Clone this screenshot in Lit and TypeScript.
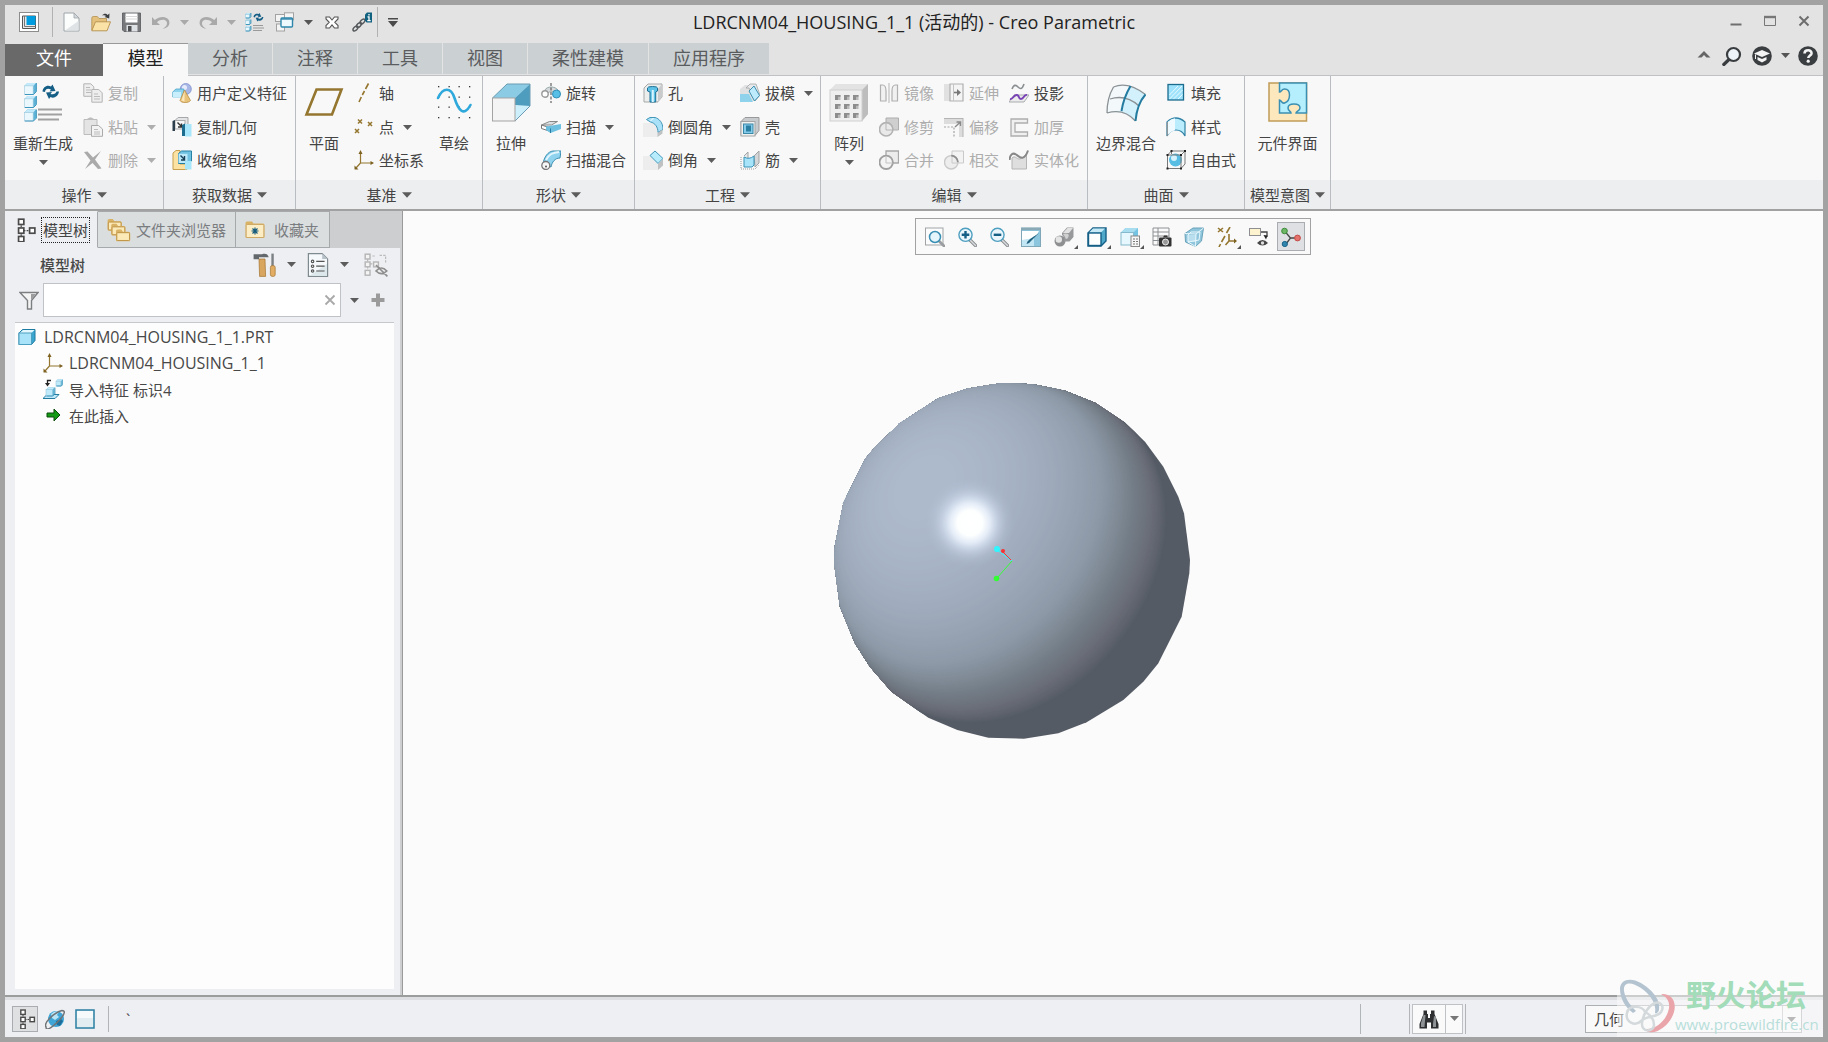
import { LitElement, html, svg, css, nothing } from "lit";
import type { SVGTemplateResult, TemplateResult } from "lit";
import { customElement, property } from "lit/decorators.js";
import { classMap } from "lit/directives/class-map.js";

/* ---------- reusable icon fragments ---------- */

const cube = (x: number, y: number, s: number, front = "#eaf8fe", side = "#5fb4d8", line = "#2f8db5") => {
  const d = s * 0.25;
  const f = s - d;
  return svg`
    <path d="M${x} ${y + d}l${d} ${-d}h${f}v${f}l${-d} ${d}z" fill=${side}/>
    <path d="M${x} ${y + d}l${d} ${-d}h${f}l${-d} ${d}z" fill="#c3eafa"/>
    <rect x=${x} y=${y + d} width=${f} height=${f} fill=${front} stroke="#9cc8dc" stroke-width=".6"/>
    <path d="M${x + 0.4} ${y + s}h${f}l${d} ${-d}v${-f}" fill="none" stroke=${line} stroke-width=".9"/>`;
};

const lens = (sign: SVGTemplateResult | typeof nothing) => svg`
  <path d="M13 13l5.500 5.500" stroke="#8b8f93" stroke-width="3.400" stroke-linecap="round"/>
  <path d="M13.500 13.500l5 5" stroke="#d9dbdd" stroke-width="1.400" stroke-linecap="round"/>
  <circle cx="8.500" cy="7.800" r="6.600" fill="#eaf6fc" stroke="#4f9fc0" stroke-width="1.400"/>
  ${sign}`;

const node = (x: number, y: number, c: string) =>
  svg`<rect x=${x} y=${y} width="4.400" height="4.400" fill="#fff" stroke=${c} stroke-width="1.400"/>`;

const tree = (c: string) => svg`
  <path d="M6 6v9M8 10.500h7" stroke=${c} stroke-width="1" stroke-dasharray="1.500 1"/>
  ${node(3.8, 1, c)}${node(3.8, 8.3, c)}${node(3.8, 15.4, c)}${node(13, 8.3, c)}`;

const cycle = svg`
  <path d="M2.500 8.500C3 4 7 1.500 11 3.500l1.500-2 3 6.500-6 .5 1.500-2C8 5 5.500 5.500 5 9z" fill="#155f86"/>
  <path d="M19 8.500C18.500 13 14 16 10.500 14l-1.500 2-3-6.500 6-.5-1.500 2c3 1 5.500-.5 6-2.500z" fill="#155f86"/>`;

const axes = svg`
  <path d="M6.500 2v11h12M6.500 13l-4.500 5" fill="none" stroke="#94762f" stroke-width="1.200"/>
  <path d="M4.500 4l2-4 2 4zM16.500 11l3.500 2-3.500 2zM.5 15.500v4h4z" fill="#7d6222"/>`;

const folder = (x: number, y: number) => svg`
  <path d=${`M${x} ${y + 2}q0-1.500 1.500-1.500h3.500l1.500 2h5.500q1.500 0 1.500 1.500v6.500q0 1-1 1h-11.500q-1 0-1-1z`} fill="#d9b265"/>
  <rect x=${x + 0.8} y=${y + 3.4} width="12" height="7.400" rx=".8" fill="#fbe9b7" stroke="#b98c3c" stroke-width=".8"/>`;

const dots9 = [0, 1, 2].map((r) => [0, 1, 2].map((c) => svg`
  <rect x=${6 + c * 9} y=${13 + r * 9} width="5.500" height="5" fill="#b9b9b9"/>
  <path d=${`M${6 + c * 9} ${18 + r * 9}v-5h5.500v1.800h-2.500v3.200z`} fill="#8d8d8d"/>`));

/* Small icons use a 20 unit box, large ones a 40 unit box. */
const ICONS: Record<string, SVGTemplateResult> = {
  app: svg`<rect x=".5" y=".5" width="19" height="19" fill="#fff" stroke="#8c8c8c"/>
    <path d="M3.500 4h13v12.500h-13z" fill="#e8e8e8" stroke="#555" stroke-width="1"/>
    <path d="M5.500 4v10.500h11" fill="none" stroke="#777"/><rect x="7.500" y="4" width="9" height="9" fill="#009ce0"/>`,
  new: svg`<path d="M3 1h10l5 5v13H3z" fill="#fbfcfc" stroke="#9fa5a8" stroke-width="1"/><path d="M4 18.500h13.500V9z" fill="#dfe3e5"/><path d="M13 1l5 5h-5z" fill="#d3d8db" stroke="#9fa5a8" stroke-width=".8"/>`,
  open: svg`<path d="M.8 18V6q0-1.500 1.500-1.500h4L8 6.500h7.500V10z" fill="#e3c07c" stroke="#b48f4c" stroke-width=".8"/>
    <path d="M4.500 9.800h15L16 18.800H.8z" fill="#fbe3a8" stroke="#b48f4c" stroke-width=".9"/>
    <path d="M11 3.500c2-2.500 4.500-2 5.500-.5l2-1.500-.3 5-4.700-1.500 1.600-1c-1-1-2.400-1-4.100-.5z" fill="#3b3f42"/>`,
  save: svg`<path d="M1.500 1h18v18.500H3L1.500 18z" fill="#77797b" stroke="#55585a" stroke-width=".8"/><rect x="4.500" y="1.500" width="12" height="9" fill="#fff"/><path d="M4.500 4.500h12M4.500 7h12" stroke="#d8d8d8"/><rect x="5.500" y="13" width="11" height="6.500" fill="#dfe2e4"/><rect x="7" y="14" width="3.500" height="5.500" fill="#4e5052"/>`,
  undo: svg`<path d="M1 5v8h8l-3-2.800C9 7.500 14 7 15.500 9.500S15 15 11.500 17c5.500-1 8-4.500 6.500-8.500S9 3.500 3.800 8z" fill="#a9a9a9"/>`,
  redo: svg`<path d="M19 5v8h-8l3-2.800C11 7.500 6 7 4.500 9.500S5 15 8.500 17C3 16 .5 12.500 2 8.500s9-5 14.200-.5z" fill="#a9a9a9"/>`,
  regenSmall: svg`${cube(0.5, 1, 5)}${cube(0.5, 7.5, 5)}${cube(0.5, 14, 5)}<g transform="translate(7 0) scale(.6)">${cycle}</g><path d="M8 13.500h10M8 16h11M8 18.500h9" stroke="#9a9a9a" stroke-width="1.200"/>`,
  windows: svg`<g fill="#f4f4f4" stroke="#a2a2a2"><rect x=".5" y="2.500" width="9" height="7"/><rect x="9.500" y=".8" width="9" height="7"/><rect x="1.500" y="12" width="8" height="7"/></g>
    <rect x="6" y="6" width="11.500" height="9" rx="1" fill="#eef9fe" stroke="#2e86ab" stroke-width="1.400"/><path d="M6 7h11.500" stroke="#2e86ab" stroke-width="1.400"/>`,
  closeWin: svg`<path d="M4 5h3.500L10 8l2.500-3H16v2l-3.200 3.300L16 13.500V16h-3.500L10 12.800 7.500 16H4v-2.500l3.200-3.200L4 7z" fill="#fff" stroke="#555" stroke-width="1.100"/>`,
  link: svg`<g fill="none" stroke="#55595c" stroke-width="1.500"><ellipse cx="3.500" cy="16.500" rx="3" ry="1.700" transform="rotate(-45 3.500 16.500)"/><ellipse cx="7" cy="13" rx="3" ry="1.700" transform="rotate(-45 7 13)"/><ellipse cx="10.500" cy="9.500" rx="3" ry="1.700" transform="rotate(-45 10.500 9.500)"/></g>
    <path d="M13 2.500l2-2h5v10h-5.500l-1.500-2z" fill="#10607f"/><path d="M17 2v1.500M15.500 4.800h1.500v3.800M15.300 8.600h3.400" stroke="#fff" stroke-width="1.300" fill="none"/>`,
  copy: svg`<g fill="#eee" stroke="#b4b4b4"><path d="M.8.800h7l3 3v9.500H.8z"/><path d="M8.800 6.500h7l3.400 3.400v9.300H8.800z"/></g><path d="M3 4.500h4M3 7h5M3 9.500h5M11 11h4M11 13.500h6M11 16h6" stroke="#bbb"/>`,
  paste: svg`<path d="M1 2.500h13v15H1z" fill="#e4e4e4" stroke="#bcbcbc"/><path d="M4.500 3V1.500L7.500.3l3 1.200V3z" fill="#bdbdbd"/><path d="M8.500 8.500h7l4 3.500v7.300h-11z" fill="#f3f3f3" stroke="#aaa"/><path d="M11 12.500h4M11 15h6M11 17h6" stroke="#bbb"/>`,
  del: svg`<path d="M1 2l3.500-.5L10 7.500 18 1l-6 8.500 6.500 9-3.500.5-5.500-6L2 19l5.500-8.500z" fill="#aaa"/>`,
  udf: svg`<circle cx="13.800" cy="6" r="5.500" fill="#a9b7e6" stroke="#7f90cd" stroke-width=".8"/><circle cx="12.500" cy="4.500" r="2.500" fill="#e6ebfb"/>
    <path d="M.8 9l3-3h8v8H.8z" fill="#8fd4ee" stroke="#4aa3c6" stroke-width=".8"/><path d="M1 9h8v5.500H1z" fill="#c9effc"/>
    <path d="M12.500 7l6 10.500c-2 2.800-9 2.800-10.500 0z" fill="#e9c27a" stroke="#b98e45" stroke-width=".8"/><path d="M12.500 8l-3 9.500 3 1z" fill="#fbe7bd"/>`,
  copyGeom: svg`<path d="M3 3.500l3-3H16v8h-3" fill="#e3e4e5" stroke="#a5a7a8"/><rect x="3" y="3.500" width="10" height="8.500" fill="#f8f8f8" stroke="#a9abac"/><path d="M.5 4l2.500-1v11H.5z" fill="#2c3e4b"/><path d="M5.500 5.500l4 4m0-3v3.500h-3.500" stroke="#333" stroke-width="1.400" fill="none"/><path d="M10 8l3-1.500V19h-3z" fill="#1b6c8f"/><path d="M13 7h6.500v12.500H13z" fill="#a8e6fb"/>`,
  shrink: svg`<path d="M1 3l3-2.500h4V14h7v5.500H1z" fill="#fbe1a2" stroke="#c79f4f"/><path d="M6.500 3.500l3-2.500h10v10l-3 2.500h-10z" fill="#6fc2e2" stroke="#2781a5"/><rect x="6.500" y="3.800" width="9" height="9.200" fill="#bdeafa"/><path d="M8.500 5.500l4 4m0-3.500v4H9" stroke="#183f55" stroke-width="1.400" fill="none"/><path d="M13 11h6.500v8.500H13z" fill="#a8e6fb"/>`,
  axis: svg`<path d="M14.500.500l-3 5.500M10.500 8l-2.200 4M7.300 14l-2.300 5" stroke="#94762f" stroke-width="1.600" fill="none"/>`,
  points: svg`<g stroke="#94762f" stroke-width="1.500"><path d="M4 2.500l4 4M8 2.500l-4 4M14 5l4 4M18 5l-4 4M1 12l4 4M5 12l-4 4"/></g>`,
  csys: axes,
  revolve: svg`<path d="M4 7C6 3 14 3 17 7l-3 3c-2-2-5-2-7 0z" fill="#d6d9db" stroke="#9aa"/><circle cx="4" cy="11" r="3.200" fill="#fff" stroke="#999" stroke-width="1.400"/><circle cx="15.500" cy="11" r="4" fill="#57bfe6" stroke="#2f8db5"/><path d="M10 0v20" stroke="#444" stroke-dasharray="3 1.500"/>`,
  sweep: svg`<path d="M.5 8l8-3.500h8l-6 3.500z" fill="#dcdfe1" stroke="#888"/><path d="M.5 8v3.500l9 3V11z" fill="#fff" stroke="#777"/><path d="M5 9.500l15-2.500v5L9.500 16 5 13z" fill="#6dc0e0"/><path d="M9.500 11.500v4.500" stroke="#287ea3"/>`,
  sweptBlend: svg`<path d="M2 14C3 7 7 1.500 12 1h8l-1 7c-5 0-8 4-9 9z" fill="#8fd3ef" stroke="#3c8fb1"/><path d="M5 10C8 4 12 2.500 18 2" stroke="#e4f6fd" stroke-width="2" fill="none"/><circle cx="4.800" cy="15.500" r="4" fill="#f6f6f6" stroke="#777" stroke-width="1.300"/><circle cx="5" cy="16.500" r="1" fill="#555"/>`,
  hole: svg`<path d="M1 5l4-4h14v13l-4 4.500V19H1z" fill="#eceded" stroke="#a5a7a8"/><path d="M15 6l4-5v13l-4 5z" fill="#c8cacb"/><path d="M4.500 5q0-1.500 5-1.500t5 1.500v3l-1.800 1v10H7V9L4.500 8z" fill="#5ec1e6" stroke="#1e7194"/><path d="M8.800 7h2v12h-2z" fill="#d8f4fe"/>`,
  round: svg`<path d="M0 6h9q6 1 6 9v5H0z" fill="#ededee"/><path d="M3.500 2.500L7 .5h5c4 1 8 5 8 12l-5 3C15 10 12 6 7.500 5z" fill="#a9e2f8" stroke="#4296b8"/><path d="M14.500 16l5-3.500v4L14.500 20z" fill="#bfc1c2"/><path d="M7.500 4l3-3" stroke="#fff"/>`,
  chamfer: svg`<path d="M0 6h7l8 7v7H0z" fill="#ededee"/><path d="M7 5.500L12 1l8 7.500-5 5z" fill="#b7ecfd" stroke="#4296b8"/><path d="M15 14l5-5v6.500L15 20z" fill="#bfc1c2"/>`,
  draft: svg`<path d="M0 6L5 2h6L14 18H0z" fill="#dfe1e2"/><path d="M0 11h9l4 8H0z" fill="#8fd2ec"/><path d="M6 5l4-4h6l4 11-5 6-6-13z" fill="#e7e8e9" stroke="#a3a5a6" stroke-width=".8"/><path d="M9 8l5-5 5.500 9.500-5 5.500z" fill="#bdebfb" stroke="#3f8fb0"/>`,
  shell: svg`<path d="M1 4.500l4-4h14v13l-4 5H1z" fill="#c8cbcd" stroke="#999"/><rect x="1" y="4.500" width="14" height="14.500" fill="#eff0f0" stroke="#a2a4a5"/><rect x="3.500" y="7" width="9.500" height="9.500" fill="#83cbe8" stroke="#3b88a9"/><rect x="6" y="8.500" width="5" height="6" fill="#2b7fa3"/>`,
  rib: svg`<path d="M4 6l4-4v11" fill="#e7e8e8" stroke="#a0a2a3"/><path d="M14 6l5-5v12l-4 4z" fill="#d4d6d7" stroke="#a0a2a3"/><path d="M4 7q5 3 10-1v9l-2 2H4z" fill="#a7e3f9" stroke="#3a93b7"/><path d="M1 7v12h14l4-4" fill="none" stroke="#999" stroke-dasharray="1 1"/>`,
  mirror: svg`<path d="M10 0v20" stroke="#b5b5b5"/><path d="M1.500 2h2c3 0 3.500 3 3.500 6v10H1.500zM18.500 2h-2c-3 0-3.500 3-3.500 6v10h5.500z" fill="#f1f1f1" stroke="#b0b0b0" stroke-width="1.200"/>`,
  trim: svg`<path d="M7 1h12.500v12H7z" fill="#cfcfcf" stroke="#aeaeae"/><circle cx="7.200" cy="12.300" r="6.700" fill="#e9e9e9" stroke="#b2b2b2" stroke-width="1.600"/><path d="M7 6v7h6.500" stroke="#b5b5b5" fill="none"/>`,
  merge: svg`<path d="M7 1h12.500v12H7z" fill="#ececec" stroke="#a8a8a8" stroke-width="1.300"/><circle cx="7.200" cy="12.300" r="6.700" fill="#f4f4f4" stroke="#a0a0a0" stroke-width="1.800"/><path d="M7 6v7h6.500" stroke="#c2c2c2" fill="none"/>`,
  extend: svg`<path d="M0 1h8v17H0z" fill="#e1e1e1"/><path d="M6 1h13v17H6z" fill="#f4f4f4" stroke="#b0b0b0" stroke-width="1.200"/><path d="M9.500 1v17" stroke="#c4c4c4"/><path d="M10 9.500h5" stroke="#777" stroke-width="1.600"/><path d="M13 6l4 3.500-4 3.500z" fill="#777"/>`,
  offset: svg`<path d="M0 1.500h19V20h-4V7H0z" fill="#dcdcdc"/><path d="M19 1v19M0 1.500h19" stroke="#b4b4b4"/><path d="M0 10h10v10" fill="none" stroke="#a3a3a3" stroke-width="1.200" stroke-dasharray="2 1.500"/><path d="M11 10l5.500-5m-4 0h4v4" stroke="#8a8a8a" fill="none" stroke-width="1.400"/>`,
  intersect: svg`<path d="M8 1h11.500v12H8z" fill="#f3f3f3" stroke="#cacaca"/><circle cx="7.200" cy="12.300" r="6.700" fill="#ededed" stroke="#c9c9c9" stroke-width="1.400"/><path d="M7.200 5.600a6.700 6.700 0 0 1 6.700 6.700" stroke="#8e8e8e" stroke-width="1.800" fill="none"/><path d="M8 7v6h6" stroke="#cacaca" fill="none"/>`,
  project: svg`<path d="M3 6c2-5 4-4 6-2s4 3 6-3" fill="none" stroke="#8a8f92" stroke-width="1.600"/><path d="M5 12h15l-5 7H0z" fill="#ececed" stroke="#a9abac"/><path d="M1 16c3 1 4-5 7-4s1 4 4 4 3-5 6-4" fill="none" stroke="#7a43b6" stroke-width="2"/>`,
  thicken: svg`<path d="M18.500 2H2v17h16.500v-4H6V6h12.500z" fill="#f0f0f0" stroke="#adadad" stroke-width="1.300"/>`,
  solidify: svg`<path d="M3 8v11h14.500V4c-2 1-4 5-7 5S6 5 3 8z" fill="#dedede" stroke="#b4b4b4"/><path d="M.5 10C1 4 4 2.500 7 4.500s8 8 12-4" fill="none" stroke="#888" stroke-width="2"/>`,
  fill: svg`<rect x="2" y="1.500" width="15.500" height="15.500" fill="#9ee3fb" stroke="#1c6c8e" stroke-width="1.300"/><path d="M3.500 12l8.500-9M3.500 16L16 3M7.500 16l9-9M12 16l4.500-4.500" stroke="#e8faff" stroke-width="1"/>`,
  style: svg`<path d="M1 5q9-8 18 0v14q-3-6-9-6t-9 6z" fill="#b9ecfc" stroke="#2f82a5" stroke-width="1.200"/><path d="M1.500 5q4-3.500 7.500-3.700v12q-4 1-7.500 4.700z" fill="#eefaff"/><path d="M1.300 5v14" stroke="#888"/>`,
  freestyle: svg`<circle cx="9.500" cy="10" r="6.500" fill="#57bde3"/><circle cx="8" cy="8" r="3" fill="#d6f2fc"/><path d="M1.500 5l4-4h13.500v13l-4 4.500H1.500zM1.500 5H15v13.500M15 5l4-4M5.500 1v3" fill="none" stroke="#777"/><g fill="#222"><rect x=".5" y="4" width="2" height="2"/><rect x="14" y="4" width="2" height="2"/><rect x="14" y="17.500" width="2" height="2"/><rect x=".5" y="17.500" width="2" height="2"/><rect x="18" y="0" width="2" height="2"/><rect x="4.500" y="0" width="2" height="2"/></g>`,
  /* large */
  regen: svg`${cube(1.5, 1, 11.5)}${cube(1.5, 14, 11.5)}${cube(1.5, 27.5, 11.5)}<g transform="translate(17 1)">${cycle}</g><path d="M15 27.500h24M15 32.500h24M15 37.500h21" stroke="#a0a0a0" stroke-width="1.800"/>`,
  plane: svg`<path d="M12.500 7.500h25L28 32.500H2.500z" fill="none" stroke="#94762f" stroke-width="2.600"/>`,
  sketch: svg`<g fill="#333">${[4, 14.5, 24.5, 35].map((x) => [4, 14.5, 24.5, 35].map((y) => svg`<rect x=${x} y=${y} width="1.300" height="1.300"/>`))}</g><path d="M4 16c5-11 13-11 16.500 0s9 20 16 7" fill="none" stroke="#2fa9dc" stroke-width="2.600" stroke-linecap="round"/>`,
  extrude: svg`<path d="M1.500 16L16 2h23v22L24 39z" fill="#d9f3fd"/><path d="M16 2h23L24 16H1.500z" fill="#8bcbe4"/><path d="M24 16L39 2v22l-15-1z" fill="#4f9dbe"/><path d="M24 24h15L24 39z" fill="#cdeffb"/><path d="M16 2h23v22L24 39M1.500 16L16 2" fill="none" stroke="#6b9cb1"/><rect x="1.500" y="16" width="22.500" height="23" fill="#f4f4f4" stroke="#a3a3a3"/>`,
  pattern: svg`<path d="M1 8l6-6h32v30l-6 7H1z" fill="#dcdcdc"/><path d="M1 8l6-6h32l-6 6z" fill="#e3e3e3"/><path d="M33 8l6-6v30l-6 7z" fill="#bdbdbd"/><rect x="1" y="8" width="32" height="31" fill="#efefef" stroke="#cfcfcf"/>${dots9}`,
  boundary: svg`<path d="M7.500 5q14-6 32 7.500Q31 22 29.500 39 18 26 1 31 1 16 7.500 5z" fill="#d3f1fc"/><path d="M7.500 5Q15 1 24.500 4q-7 12-9 25-7-1-14.500 2Q1 16 7.500 5z" fill="#f3f8fa"/><path d="M7.500 5q14-6 32 7.500M4 17q16-5 29 7M1 31q17-5 28.500 8M7.500 5Q1 16 1 31" fill="none" stroke="#8b9296" stroke-width="1.300"/><path d="M39.500 12.500Q31 22 29.500 39M24.500 4q-7 12-9 25" fill="none" stroke="#237ba0" stroke-width="2"/>`,
  component: svg`<rect x="1" y="1" width="37.500" height="38" fill="#fde7bd" stroke="#c09c58" stroke-width="1.500"/><path d="M11.500 1h27v30H28c0-2 4-2 4-5s-3-4-6-4-6 1-6 4 3 3 3 5H11.500V18c2 0 2 4 5 3s5-4 5-8-2-6-5-6-3 3-5 3z" fill="#b5effe" stroke="#3b8fb2" stroke-width="1.500"/>`,
  /* view toolbar */
  refit: svg`<rect x=".5" y="1" width="17.500" height="17" fill="#fcfcfc" stroke="#a0a3a5"/><path d="M14 14l5 5" stroke="#9a9da0" stroke-width="2.800" stroke-linecap="round"/><circle cx="10" cy="10" r="5.500" fill="#e5f5fc" stroke="#3a8fb4" stroke-width="1.500"/>`,
  zoomIn: lens(svg`<path d="M8.500 4v7.600M4.700 7.800h7.600" stroke="#155f86" stroke-width="2.400"/>`),
  zoomOut: lens(svg`<path d="M4.700 7.800h7.600" stroke="#155f86" stroke-width="2.400"/>`),
  repaint: svg`<rect x=".5" y="1" width="19" height="18.500" fill="#8cc6de" stroke="#7fa7b8"/><path d="M1 4h17q-3 9-17 9z" fill="#fff"/><path d="M1 13q8 0 12-4v10H1z" fill="#c3e6f4"/><path d="M.5 2h19" stroke="#8aa9b6" stroke-width="2.400"/><path d="M18 6l-8 8q-2 3-4.500 3 .5-3 3-4.500z" fill="#20617f"/>`,
  shading: svg`<circle cx="6" cy="14" r="5.500" fill="#8d8f91"/><circle cx="4.800" cy="12.500" r="3.200" fill="#e4e4e4"/><path d="M8 8V6l5-5.500h6.500V10l-4 4.500H10q1-4-2-6.500z" fill="#97999b"/><path d="M9 6l4.500-5h5.500l-4 5z" fill="#e2e2e2"/><path d="M9 7q3-1 5 0t-1 5q-2 0-2-2z" fill="#d0d0d0"/>`,
  solidView: svg`<path d="M1 6l5-5h13v13l-5 5H1z" fill="#4fa7c9" stroke="#155f86" stroke-width="1.400"/><path d="M2 5.500l4-4h12l-4 4z" fill="#c5e9f6"/><rect x="1.500" y="6" width="12.500" height="12.500" fill="#fdfefe" stroke="#155f86" stroke-width="1.400"/>`,
  savedViews: svg`<path d="M1 5.500L5.500 1H18v12L13 18H1z" fill="#74c3e2"/><path d="M1 5.500L5.500 1H18l-4.500 4.500z" fill="#a8ddf0"/><rect x="1" y="5.500" width="12.500" height="12.500" fill="#e6f7fd" stroke="#86b9cd"/><rect x="11" y="9" width="8.500" height="10.500" fill="#f6f6f6" stroke="#888"/><path d="M13 12h2M16 12h2M13 14.500h2M16 14.500h2M13 17h2M16 17h2" stroke="#777"/>`,
  viewMgr: svg`<path d="M1 1h16v17H1zM1 5h16M1 9h16M1 13.500h16M6 1v17" fill="#fafafa" stroke="#8d9092"/><rect x="7" y="10.500" width="12.500" height="9" rx="1" fill="#333"/><path d="M11 10.500l1-2h3l1 2z" fill="#333"/><circle cx="13.500" cy="15" r="3" fill="#999" stroke="#eee"/>`,
  persp: svg`<path d="M1 6.500L9 1h10.500l-2 13-6 5.500L1.500 15z" fill="#8fc6dc" stroke="#6aa3ba"/><path d="M4 8h8v7H4z" fill="#b9dfee"/><path d="M1 6.500l11 .5 7.500-6M12 7l-.5 12.500M4 8l3-3h9M4 8v7l7.500 4.500M16 5l-1 8-11 2" fill="none" stroke="#e8f7fd" stroke-width="1"/>`,
  datum: svg`<g stroke="#94762f" stroke-width="1.600" fill="none"><path d="M1 1l5 4M6 1L1 5M13 0L9.500 6M8 9l-3.500 6M3.500 17L2 20M12 7v7h6M12 14l-3.500 4"/></g><path d="M17 11.500l3 2.500-3 2.500z" fill="#7d6222"/>`,
  annot: svg`<rect x=".5" y="1.500" width="11" height="7" fill="#fdf3cf" stroke="#8d8f90"/><path d="M12 5h6v5" stroke="#444" stroke-width="1.300" fill="none"/><path d="M14.500 8l4 .5-1.500 4z" fill="#222"/><path d="M8 16q5.500-6 11 0-5.500 5-11 0z" fill="#444"/><circle cx="13.500" cy="16" r="1.700" fill="#ddd"/>`,
  spin: svg`<path d="M4 4.500l5.500 6.500L5 17M9.500 11h6" stroke="#444" stroke-width="1.300" fill="none"/><circle cx="3.500" cy="4" r="2.800" fill="#6cb665" stroke="#3f8b3c"/><circle cx="3.800" cy="17" r="2.600" fill="#2f85ad" stroke="#1b6285"/><circle cx="16.500" cy="11" r="2.900" fill="#e4716c" stroke="#c24c49"/>`,
  /* side panel */
  tree: tree("#4a4a4a"),
  folders: svg`<g transform="scale(.88)">${folder(0.5, 0.5)}${folder(4, 5)}${folder(8.5, 10.5)}</g>`,
  favorite: svg`<path d="M.5 3q0-1.500 1.500-1.500h5l1.500 2H18q1.500 0 1.500 1.500v12q0 1-1 1h-17q-1 0-1-1z" fill="#d9b265"/><rect x="1.200" y="4.500" width="17.600" height="13" rx=".8" fill="#fcedc4" stroke="#c39a50" stroke-width=".7"/><path d="M10 7.500v7M6.500 11h7M7.500 8.500l5 5M12.500 8.500l-5 5" stroke="#135a7d" stroke-width="1.200"/>`,
  tools: svg`<path d="M.5 1h7c3-1 5 0 5.500 2.500L11 3.500H5v1.800H.5z" fill="#63686c"/><path d="M5 5h5l.5 14.500h-5z" fill="#d9a660" stroke="#a57534" stroke-width=".6"/><path d="M15.300.5h2v11h-2z" fill="#7b8084"/><rect x="14.500" y="10.500" width="4" height="9" rx="1.500" fill="#e2ad62" stroke="#a57534" stroke-width=".6"/>`,
  settings: svg`<path d="M2 .5h11.500l4.500 4.500v14.500H2z" fill="#f5f9fb" stroke="#7f8a90"/><path d="M3 19L17.500 9v10z" fill="#dde8ec"/><path d="M13.500.5L18 5h-4.500z" fill="#b7c2c8"/><path d="M8.500 7h7M8.500 11h7M8.500 15h7" stroke="#555"/><g fill="none" stroke="#555"><circle cx="5.500" cy="7" r="1"/><circle cx="5.500" cy="11" r="1"/><circle cx="5.500" cy="15" r="1"/></g>`,
  hideTree: svg`<path d="M3 5v11M5 9h4M7 2.500h3M13 2h5v7" stroke="#bbb" fill="none" stroke-dasharray="2 1"/><g fill="#f4f4f4" stroke="#b6b6b6" stroke-width="1.200"><rect x="1" y="1" width="4" height="4"/><rect x="1" y="7.500" width="4" height="4"/><rect x="1" y="14.500" width="4" height="4"/><rect x="8" y="7.500" width="4" height="4"/></g><path d="M10 15q4.500-5 9 0-4.500 4.500-9 0zM10 10l9.500 9.500" fill="none" stroke="#8e8e8e" stroke-width="1.400"/>`,
  funnel: svg`<path d="M1 2.500h18l-6.500 8v8.500h-4v-8.500z" fill="#f4f4f4" stroke="#7c7f81" stroke-width="1.400"/><path d="M12 4h5l-5 6z" fill="#9a9c9e"/>`,
  plus: svg`<path d="M8 3.500h4V8h4.500v4H12v4.500H8V12H3.500V8H8z" fill="#9b9b9b"/>`,
  part: svg`<path d="M1 6l3.500-3.500H17v11L13.500 17.500H1z" fill="#3aa5cf" stroke="#1d7ba1" stroke-width="1"/><path d="M1.500 6L5 3h11.500l-3 3z" fill="#e2f7fe"/><rect x="1" y="6" width="12.500" height="11.500" fill="#a8e3f9" stroke="#4d9fc0"/>`,
  importFeat: svg`<path d="M8 1.500H4.500v3" fill="none" stroke="#222" stroke-width="1.300"/><path d="M2 4h5L4.500 7.500z" fill="#222"/>${cube(13, 0.5, 6.5, "#bfeafa")}<path d="M4 15.500h12l-4 4H0z" fill="#bfe9f8" stroke="#237ba0"/>${cube(3, 8.500, 8.5, "#bfeafa")}`,
  insertHere: svg`<path d="M4 8h7V4l6 6-6 6v-4H4z" fill="#149a14" stroke="#0b4d0b" stroke-width="1"/>`,
  /* status bar and window corner */
  globe: svg`<circle cx="11" cy="10" r="8" fill="#3fa5d6"/><path d="M6 5q4-4 8-2l-2 3 2 2-4 3-3-2z" fill="#b8e4f6"/><path d="M11 12l5-2 2 2-3 5-3-1z" fill="#1c6f9c"/><path d="M1 18q-2-3 4-9T17 1.500q4 0 1 5T8 17t-7 1z" fill="none" stroke="#6f7478" stroke-width="1.500"/>`,
  square: svg`<rect x="1" y="1" width="18" height="18" fill="#e2edf2" stroke="#2a7fa3" stroke-width="1.500"/><rect x="2" y="2" width="16" height="7" fill="#f7fafb"/>`,
  binoculars: svg`<path d="M4.500 1.500h3.500v3.500h1V9h2V5h1V1.500h3.500V5L19.500 15v4.500H12v-6H8v6H.5V15L4.500 5z" fill="#2d2f31"/><path d="M4.500 6L2 14v4h3.500l1-12zM15 7l-1 8v3h3V8z" fill="#8f9294"/>`,
  search: svg`<path d="M7.500 13L1.800 18.500" stroke="#3a3d40" stroke-width="3.200" stroke-linecap="round"/><circle cx="11.500" cy="8.500" r="6.500" fill="#edf5fa" stroke="#3a3d40" stroke-width="2.200"/>`,
  learn: svg`<circle cx="10" cy="10" r="9.800" fill="#3b3e41"/><path d="M10 4l8 3.500-8 3.500-8-3.500zM5.500 11l4.500 2 4.500-2v3L10 16.500 5.500 14z" fill="#f4f4f4"/><path d="M3.500 8.500V13" stroke="#f4f4f4"/>`,
  help: svg`<circle cx="10" cy="10" r="9.800" fill="#3b3e41"/><path d="M6.500 7.500c.3-4.500 7.500-4 7 0-.3 2-3 2-3.200 4.500" fill="none" stroke="#f4f4f4" stroke-width="2.600"/><circle cx="10.200" cy="15.200" r="1.600" fill="#f4f4f4"/>`,
  min: svg`<path d="M4.500 12.500h11" stroke="#6e6e6e" stroke-width="2"/>`,
  max: svg`<path d="M4.500 4.500h11v9h-11z" fill="none" stroke="#777"/><path d="M4 5h12" stroke="#777" stroke-width="2.400"/>`,
  close: svg`<path d="M5.500 4.500l9 9M14.500 4.500l-9 9" stroke="#6e6e6e" stroke-width="2"/>`,
  collapse: svg`<path d="M3.500 11.500L10 5l6.500 6.500h-4L10 9l-2.500 2.500z" fill="#666"/>`,
  clear: svg`<path d="M5.500 5.500l9 9M14.500 5.500l-9 9" stroke="#a9a9a9" stroke-width="1.800"/>`,
};

const LARGE = new Set(["regen", "plane", "sketch", "extrude", "pattern", "boundary", "component"]);

@customElement("ui-icon")
class UiIcon extends LitElement {
  @property() name = "";
  static styles = css`
    :host { display: inline-flex; flex: none; width: 20px; height: 20px; }
    :host([large]) { width: 40px; height: 40px; }
    :host([medium]) { width: 24px; height: 24px; }
    svg { width: 100%; height: 100%; display: block; }
  `;
  render() {
    const n = LARGE.has(this.name) ? 40 : 20;
    return html`<svg viewBox="0 0 ${n} ${n}" aria-hidden="true">${ICONS[this.name] ?? nothing}</svg>`;
  }
}

const caret = () => html`<svg class="caret" viewBox="0 0 9 5" aria-hidden="true"><path d="M0 0h9L4.500 5z" fill="currentColor"/></svg>`;

/* ---------- ribbon ---------- */

interface Cmd { icon: string; text: string; menu?: boolean; off?: boolean; }
interface Group { label: string; menu: boolean; cols: (Cmd | Cmd[])[]; layout: string; }

const GROUPS: Group[] = [
  { label: "操作", menu: true, layout: "g-ops", cols: [
    { icon: "regen", text: "重新生成", menu: true },
    [{ icon: "copy", text: "复制", off: true }, { icon: "paste", text: "粘贴", off: true, menu: true }, { icon: "del", text: "删除", off: true, menu: true }]] },
  { label: "获取数据", menu: true, layout: "g-data", cols: [
    [{ icon: "udf", text: "用户定义特征" }, { icon: "copyGeom", text: "复制几何" }, { icon: "shrink", text: "收缩包络" }]] },
  { label: "基准", menu: true, layout: "g-datum", cols: [
    { icon: "plane", text: "平面" },
    [{ icon: "axis", text: "轴" }, { icon: "points", text: "点", menu: true }, { icon: "csys", text: "坐标系" }],
    { icon: "sketch", text: "草绘" }] },
  { label: "形状", menu: true, layout: "g-shape", cols: [
    { icon: "extrude", text: "拉伸" },
    [{ icon: "revolve", text: "旋转" }, { icon: "sweep", text: "扫描", menu: true }, { icon: "sweptBlend", text: "扫描混合" }]] },
  { label: "工程", menu: true, layout: "g-eng", cols: [
    [{ icon: "hole", text: "孔" }, { icon: "round", text: "倒圆角", menu: true }, { icon: "chamfer", text: "倒角", menu: true }],
    [{ icon: "draft", text: "拔模", menu: true }, { icon: "shell", text: "壳" }, { icon: "rib", text: "筋", menu: true }]] },
  { label: "编辑", menu: true, layout: "g-edit", cols: [
    { icon: "pattern", text: "阵列", menu: true },
    [{ icon: "mirror", text: "镜像", off: true }, { icon: "trim", text: "修剪", off: true }, { icon: "merge", text: "合并", off: true }],
    [{ icon: "extend", text: "延伸", off: true }, { icon: "offset", text: "偏移", off: true }, { icon: "intersect", text: "相交", off: true }],
    [{ icon: "project", text: "投影" }, { icon: "thicken", text: "加厚", off: true }, { icon: "solidify", text: "实体化", off: true }]] },
  { label: "曲面", menu: true, layout: "g-surf", cols: [
    { icon: "boundary", text: "边界混合" },
    [{ icon: "fill", text: "填充" }, { icon: "style", text: "样式" }, { icon: "freestyle", text: "自由式" }]] },
  { label: "模型意图", menu: true, layout: "g-intent", cols: [{ icon: "component", text: "元件界面" }] },
];

@customElement("ribbon-bar")
class RibbonBar extends LitElement {
  static styles = css`
    :host { display: flex; background: #f8f8f8; border-bottom: 2px solid #a1a1a1; font-size: 15px; }
    button { font: inherit; color: #444; background: none; border: 0; padding: 0; margin: 0; white-space: nowrap; line-height: 20px; }
    button:disabled { color: #adadad; }
    .caret { width: 9px; height: 5px; flex: none; color: #5c5c5c; }
    button:disabled .caret { color: #aeaeae; }
    .group { display: flex; flex-direction: column; border-right: 1px solid #b9bcc0; }
    .rest { flex: 1; display: flex; flex-direction: column; }
    .body { flex: 1; display: grid; padding-bottom: 4px; }
    .g-ops .body { grid-template-columns: 76px 82px; }
    .g-data .body { grid-template-columns: 125px; padding-left: 6px; }
    .g-datum .body { grid-template-columns: 56px 74px 56px; }
    .g-shape .body { grid-template-columns: 56px 95px; }
    .g-eng .body { grid-template-columns: 97px 82px; padding-left: 6px; }
    .g-edit .body { grid-template-columns: 56px 65px 65px 80px; }
    .g-surf .body { grid-template-columns: 76px 80px; }
    .g-intent .body { grid-template-columns: 85px; }
    .col { display: grid; grid-template-rows: 34px 34px 32px; justify-items: start; }
    .small { display: flex; align-items: center; gap: 5px; padding-left: 2px; }
    .small .caret { margin-left: 4px; }
    .big { display: flex; flex-direction: column; align-items: center; justify-content: flex-start; padding-top: 6px; gap: 11px; }
    .big .caret { margin-top: -4px; }
    .foot { display: flex; align-items: center; justify-content: center; gap: 5px; height: 29px; background: #edeef0; }
    .foot .caret { width: 10px; height: 6px; }
  `;

  private small(c: Cmd) {
    return html`<button class="small" ?disabled=${c.off}><ui-icon .name=${c.icon}></ui-icon><span>${c.text}</span>${c.menu ? caret() : nothing}</button>`;
  }
  private big(c: Cmd) {
    return html`<button class="big"><ui-icon large .name=${c.icon}></ui-icon><span>${c.text}</span>${c.menu ? caret() : nothing}</button>`;
  }
  render() {
    return html`
      ${GROUPS.map((g) => html`
        <div class="group ${g.layout}" role="group" aria-label=${g.label}>
          <div class="body">
            ${g.cols.map((c) => Array.isArray(c) ? html`<div class="col">${c.map((x) => this.small(x))}</div>` : this.big(c))}
          </div>
          <button class="foot">${g.label}${caret()}</button>
        </div>`)}
      <div class="rest"><div class="body"></div><div class="foot"></div></div>`;
  }
}

/* ---------- model tree panel ---------- */

@customElement("tree-panel")
class TreePanel extends LitElement {
  static styles = css`
    :host { display: flex; flex-direction: column; width: 397px; background: #eeeff2; font-size: 15px; color: #484848; border-right: 1px solid #9a9a9a; box-shadow: inset -2px 0 #cdcfd1; }
    button { font: inherit; color: inherit; background: none; border: 0; padding: 0; display: flex; align-items: center; }
    .caret { width: 9px; height: 5px; color: #5c5c5c; }
    .tabs { display: flex; height: 37px; background: #cdced0; }
    .tab { background: #dadedf; color: #7a7d7f; border: 1px solid #a6a9ab; border-left: 0; gap: 5px; padding: 0 9px; white-space: nowrap; line-height: 20px; }
    .tab.on { background: #eeeff2; color: #444; border-color: transparent #a6a9ab transparent transparent; gap: 3px; padding: 0 7px 0 9px; }
    .tab.on span { border: 1px dotted #222; padding: 2px 1px; }
    .tab.fav { gap: 9px; padding: 0 10px 0 9px; }
    .head { display: flex; align-items: center; height: 33px; padding: 0 14px 2px 35px; gap: 10px; }
    .head .hide { margin-left: 5px; }
    h2 { margin: 0; flex: 1; font-size: 15px; font-weight: 500; }
    .filter { display: flex; align-items: center; gap: 4px; padding: 0 14px; }
    .box { flex: 1; display: flex; align-items: center; height: 32px; border: 1px solid #bfc3c7; background: #fff; }
    .box input { flex: 1; min-width: 0; height: 100%; border: 0; outline: 0; background: none; font: inherit; padding: 0 6px; }
    .filter .drop { padding: 0 5px; }
    ul { flex: 1; list-style: none; margin: 5px 8px 6px 10px; padding: 1px 0; background: #fdfdfd; border-top: 1px solid #c6c9cb; }
    li { display: flex; align-items: center; height: 26px; gap: 6px; padding-left: 28px; white-space: nowrap; }
    li.root { padding-left: 3px; }
    li.latin { font-size: 16px; }
  `;
  render() {
    return html`
      <div class="tabs" role="tablist">
        <button class="tab on" role="tab" aria-selected="true"><ui-icon medium .name=${"tree"}></ui-icon><span>模型树</span></button>
        <button class="tab" role="tab"><ui-icon medium .name=${"folders"}></ui-icon>文件夹浏览器</button>
        <button class="tab fav" role="tab"><ui-icon .name=${"favorite"}></ui-icon>收藏夹</button>
      </div>
      <div class="head">
        <h2>模型树</h2>
        <button aria-label="工具"><ui-icon medium .name=${"tools"}></ui-icon></button>
        <button aria-label="工具菜单">${caret()}</button>
        <button aria-label="设置"><ui-icon medium .name=${"settings"}></ui-icon></button>
        <button aria-label="设置菜单">${caret()}</button>
        <button class="hide" aria-label="隐藏树"><ui-icon medium .name=${"hideTree"}></ui-icon></button>
      </div>
      <div class="filter">
        <ui-icon .name=${"funnel"}></ui-icon>
        <div class="box"><input type="text" aria-label="过滤" /><button aria-label="清除"><ui-icon .name=${"clear"}></ui-icon></button></div>
        <button class="drop" aria-label="过滤菜单">${caret()}</button>
        <button aria-label="添加"><ui-icon .name=${"plus"}></ui-icon></button>
      </div>
      <ul>
        <li class="root latin"><ui-icon .name=${"part"}></ui-icon>LDRCNM04_HOUSING_1_1.PRT</li>
        <li class="latin"><ui-icon .name=${"csys"}></ui-icon>LDRCNM04_HOUSING_1_1</li>
        <li><ui-icon .name=${"importFeat"}></ui-icon>导入特征 标识4</li>
        <li><ui-icon .name=${"insertHere"}></ui-icon>在此插入</li>
      </ul>`;
  }
}

/* ---------- graphics area ---------- */

const STOPS: [number, number, number, number][] = [
  [0, 85, 91, 101], [0.14, 105, 108, 118], [0.3, 116, 126, 136], [0.5, 141, 153, 167], [0.75, 159, 171, 188], [1, 174, 187, 205],
];

function shade(c: number): string {
  const i = Math.max(1, STOPS.findIndex((s) => s[0] >= c));
  const a = STOPS[i - 1], b = STOPS[i];
  const t = (c - a[0]) / (b[0] - a[0]);
  return `rgb(${[1, 2, 3].map((k) => Math.round(a[k] + (b[k] - a[k]) * t)).join(",")})`;
}

/* Bands of equal diffuse light on a sphere of radius R. The local x axis points to the light. */
const R = 179;
const LIGHT_Z = 0.76;
const LIGHT_X = Math.sqrt(1 - LIGHT_Z * LIGHT_Z);
const BANDS = Array.from({ length: 96 }, (_, i) => {
  const c = i / 96;
  const k = Math.sqrt(1 - c * c);
  const edge = c / LIGHT_X;
  return svg`<g fill=${shade(c)}>
    <ellipse cx=${c * LIGHT_X * R} cy="0" rx=${k * LIGHT_Z * R} ry=${k * R}/>
    ${edge < 1 ? svg`<rect x=${edge * R} y=${-R - 4} width=${R * 1.1} height=${2 * R + 8}/>` : nothing}
  </g>`;
});

const OUTLINE = "545,39 640,43 735,62 825,98 915,158 975,215 1030,290 1075,380 1092,430 1110,570 1108,610 1085,740 1015,880 970,935 910,990 800,1057 715,1090 612,1106 505,1103 412,1080 325,1043 215,965 150,890 105,820 60,710 42,575 45,525 70,400 135,268 165,232 240,160 355,85 440,56";

const VIEW_TOOLS: [string, string, boolean?][] = [
  ["refit", "重新调整"], ["zoomIn", "放大"], ["zoomOut", "缩小"], ["repaint", "重画"], ["shading", "渲染选项", true], ["solidView", "显示样式", true],
  ["savedViews", "已保存方向", true], ["viewMgr", "视图管理器"], ["persp", "透视图"], ["datum", "基准显示过滤器", true], ["annot", "注释显示"], ["spin", "旋转中心"],
];

@customElement("model-view")
class ModelView extends LitElement {
  static styles = css`
    :host { position: relative; flex: 1; min-width: 0; display: flex; justify-content: center; align-items: flex-start; background: #fbfbfb; }
    .scene { position: absolute; inset: 0; width: 100%; height: 100%; }
    .tools { position: relative; display: flex; gap: 4px; margin-top: 7px; padding: 3px 5px; border: 1px solid #a0a2a4; background: #f9f9f9; }
    .tools button { position: relative; width: 28px; height: 29px; padding: 0; border: 1px solid transparent; background: none; display: flex; align-items: center; justify-content: center; }
    .tools button.menu { width: 29px; }
    .tools button.on { background: #dee0e3; border-color: #a9acb0; }
    .more { position: absolute; right: -1px; bottom: 1px; width: 4px; height: 4px; background: #555; clip-path: polygon(100% 0, 100% 100%, 0 100%); }
  `;
  render(): TemplateResult {
    return html`
      <svg class="scene" viewBox="0 0 1420 784" role="img" aria-label="模型">
        <defs>
          <clipPath id="body"><polygon points=${OUTLINE} transform="translate(417 159) scale(.33333)"/></clipPath>
          <radialGradient id="gloss">
            <stop offset="0" stop-color="#fff"/><stop offset=".28" stop-color="#fdffff"/>
            <stop offset=".44" stop-color="#eef5ff" stop-opacity=".86"/><stop offset=".6" stop-color="#dde8f8" stop-opacity=".55"/>
            <stop offset=".8" stop-color="#c9d6ea" stop-opacity=".2"/><stop offset="1" stop-color="#b4c2d6" stop-opacity="0"/>
          </radialGradient>
        </defs>
        <g clip-path="url(#body)">
          <rect x="420" y="160" width="380" height="380" fill="#555b65"/>
          <g transform="translate(609 350) rotate(220)">${BANDS}</g>
          <circle cx="567" cy="312" r="45" fill="url(#gloss)"/>
        </g>
        <path d="M594 339l15 11" stroke="#35f4ff"/><path d="M600 341l8 8" stroke="#f33"/><path d="M609 350l-15 17" stroke="#3f3"/>
        <circle cx="594" cy="338" r="3" fill="#2ff6ff"/><circle cx="600" cy="340" r="2" fill="#f63232"/><circle cx="593.500" cy="367.500" r="2.800" fill="#32ff32"/>
      </svg>
      <div class="tools" role="toolbar">
        ${VIEW_TOOLS.map(([n, label, more]) => html`<button aria-label=${label} class=${classMap({ on: n === "spin", menu: !!more })}><ui-icon .name=${n}></ui-icon>${more ? html`<i class="more"></i>` : nothing}</button>`)}
      </div>`;
  }
}

/* ---------- status bar ---------- */

@customElement("status-bar")
class StatusBar extends LitElement {
  static styles = css`
    :host { display: flex; align-items: center; height: 37px; padding: 3px 3px 0 7px; background: #eeeff2; border-top: 2px solid #9b9c9c; box-shadow: inset 0 3px #dcdee1; font-size: 15px; color: #444; }
    button { padding: 0; border: 0; background: none; display: flex; align-items: center; justify-content: center; }
    .caret { width: 9px; height: 5px; color: #777; }
    .left { display: flex; align-items: center; gap: 7px; }
    .left .on { width: 26px; height: 26px; box-sizing: border-box; padding-left: 3px; border: 1px solid #a9acb0; background: #dfe0e2; }
    .left button + button + button { margin-left: 3px; }
    .sep { width: 1px; height: 30px; background: #b2b5b8; }
    .left .sep { height: 26px; margin-left: 6px; }
    .msg { flex: 1; padding-left: 17px; line-height: 26px; }
    .gap { width: 48px; }
    .find { display: flex; height: 30px; margin: 0 2px; border: 1px solid #bfc2c5; background: #fafafa; box-sizing: border-box; }
    .find button { width: 32px; }
    .find button + button { width: 17px; border-left: 1px solid #bfc2c5; }
    .pick { position: relative; width: 217px; margin-left: 119px; margin-right: 18px; }
    .pick select { width: 100%; height: 28px; box-sizing: border-box; display: block; appearance: none; border: 1px solid #adb0b3; border-radius: 0; background: #f9f9f9; font: inherit; color: inherit; padding: 0 8px; }
    .pick .caret { position: absolute; right: 6px; top: 12px; pointer-events: none; }
    .pick::after { content: ""; position: absolute; right: 19px; top: 1px; bottom: 1px; width: 1px; background: #bfc2c5; pointer-events: none; }
  `;
  render() {
    return html`
      <div class="left">
        <button class="on" aria-label="导航器"><ui-icon .name=${"tree"}></ui-icon></button>
        <button aria-label="浏览器"><ui-icon .name=${"globe"}></ui-icon></button>
        <button aria-label="全屏"><ui-icon .name=${"square"}></ui-icon></button>
        <div class="sep"></div>
      </div>
      <div class="msg">\`</div>
      <div class="sep"></div><div class="gap"></div><div class="sep"></div>
      <div class="find"><button aria-label="查找"><ui-icon .name=${"binoculars"}></ui-icon></button><button aria-label="查找菜单">${caret()}</button></div>
      <div class="sep"></div>
      <div class="pick"><select aria-label="选择过滤器"><option>几何</option></select>${caret()}</div>`;
  }
}

/* ---------- application shell ---------- */

const TABS = ["模型", "分析", "注释", "工具", "视图", "柔性建模", "应用程序"];
const QUICK: [string, string][] = [
  ["new", "新建"], ["open", "打开"], ["save", "保存"], ["undo", "撤消"], ["-off", "撤消菜单"], ["redo", "重做"], ["-off", "重做菜单"],
  ["regenSmall", "重新生成"], ["windows", "窗口"], ["-", "窗口菜单"], ["closeWin", "关闭"], ["link", "链接"],
];

@customElement("app-root")
class AppRoot extends LitElement {
  static styles = css`
    :host { display: flex; flex-direction: column; position: relative; box-sizing: border-box; min-height: 100vh; border: 5px solid #a2a2a2; background: #e3e3e3; color: #222; font-family: "Open Sans", "Noto Sans CJK SC", sans-serif; font-size: 15px; }
    button { font: inherit; color: inherit; background: none; border: 0; padding: 0; display: flex; align-items: center; justify-content: center; }
    .caret { width: 9px; height: 5px; color: #555; }
    .off .caret { color: #a9a9a9; }
    .title { display: grid; grid-template-columns: 1fr auto 1fr; align-items: center; height: 34px; padding-bottom: 4px; }
    h1 { margin: 0; font-size: 18px; font-weight: 400; line-height: 24px; white-space: nowrap; }
    .quick { display: flex; align-items: center; height: 100%; }
    .quick button { width: 30px; height: 30px; }
    .quick .arrow { width: 17px; }
    .quick .app { width: 47px; }
    .vsep { width: 1px; height: 30px; background: #b0b2b4; }
    .quick .vsep + button { margin-left: 3px; }
    .quick .vsep + .custom { margin-left: 0; }
    .custom svg { width: 10px; height: 9px; }
    .win { display: flex; justify-content: flex-end; gap: 14px; padding-right: 9px; }
    .tabrow { display: flex; align-items: stretch; height: 33px; box-shadow: inset 0 -1px #bfc1c4; }
    .tab { width: 84px; margin: 0 1px 2px 0; padding-bottom: 2px; background: #cbd0d3; color: #5a5c5e; font-size: 18px; line-height: 24px; }
    .tab.wide { width: 120px; }
    .tab.file { width: 98px; margin: 1px 0 0; padding-bottom: 5px; background: #696969; color: #fff; }
    .tab.on { width: 85px; margin: 0; padding-bottom: 4px; background: #f8f8f8; color: #222; box-shadow: inset 0 1px #999; }
    .aid { flex: 1; display: flex; justify-content: flex-end; align-items: center; padding: 0 0 8px; }
    .aid button { width: 30px; }
    .aid button:first-child { width: 26px; }
    .aid .arrow { width: 16px; }
    .main { flex: 1; display: flex; }
    .mark { position: absolute; right: 0; bottom: 0; width: 206px; height: 62px; background: rgba(252, 252, 252, .5); pointer-events: none; display: flex; align-items: center; }
    .mark svg { width: 58px; height: 58px; flex: none; }
    .mark .name { padding: 0 0 22px 11px; line-height: 30px; font-size: 30px; font-weight: 700; color: #a2dcb9; white-space: nowrap; }
    .mark p { position: absolute; margin: 0; left: 58px; bottom: 3px; font-size: 15px; line-height: 20px; color: #b8deda; }
  `;
  render() {
    return html`
      <header class="title">
        <div class="quick" role="toolbar">
          <button class="app" aria-label="应用程序菜单"><ui-icon .name=${"app"}></ui-icon></button>
          <div class="vsep"></div>
          ${QUICK.map(([n, label]) => n.startsWith("-")
            ? html`<button class="arrow ${n.slice(1)}" aria-label=${label}>${caret()}</button>`
            : html`<button aria-label=${label}><ui-icon .name=${n}></ui-icon></button>`)}
          <div class="vsep"></div>
          <button class="custom" aria-label="自定义快速访问工具栏"><svg viewBox="0 0 10 9"><path d="M0 0h10v1.500H0zM0 3h10L5 9z" fill="#4a4a4a"/></svg></button>
        </div>
        <h1>LDRCNM04_HOUSING_1_1 (活动的) - Creo Parametric</h1>
        <div class="win">
          <button aria-label="最小化"><ui-icon .name=${"min"}></ui-icon></button>
          <button aria-label="最大化"><ui-icon .name=${"max"}></ui-icon></button>
          <button aria-label="关闭窗口"><ui-icon .name=${"close"}></ui-icon></button>
        </div>
      </header>
      <nav class="tabrow">
        <button class="tab file">文件</button>
        ${TABS.map((t, i) => html`<button class=${classMap({ tab: true, on: i === 0, wide: t.length > 2 })}>${t}</button>`)}
        <div class="aid">
          <button aria-label="最小化功能区"><ui-icon .name=${"collapse"}></ui-icon></button>
          <button aria-label="搜索"><ui-icon .name=${"search"}></ui-icon></button>
          <button aria-label="学习"><ui-icon .name=${"learn"}></ui-icon></button>
          <button class="arrow" aria-label="学习菜单">${caret()}</button>
          <button aria-label="帮助"><ui-icon .name=${"help"}></ui-icon></button>
        </div>
      </nav>
      <ribbon-bar></ribbon-bar>
      <div class="main"><tree-panel></tree-panel><model-view></model-view></div>
      <status-bar></status-bar>
      <div class="mark">
        <svg viewBox="0 0 58 58" aria-hidden="true">
          <path fill-rule="evenodd" d="M3 12C3 2 14 0 24 6s20 16 18 27c-1 3-3 4-4 3 2-9-5-19-14-25S6 4 7 14c1 7 6 14 12 20l-3 2C8 30 3 21 3 12z" fill="#b3c3d0"/>
          <path fill-rule="evenodd" d="M44 17c10-1 16 7 13 18S42 57 32 55c-4-1-4-3-2-3 9 0 18-8 21-17s0-14-7-18z" fill="#e9a5aa"/>
          <path d="M28 35c-2-6-16-8-18 1s8 14 14 8 16-3 20-9-1-11-6-9-12 10-13 20 12 9 12 2-5-11-9-13z" fill="none" stroke="#d4d9dc" stroke-width="2.500"/>
        </svg>
        <div class="name">野火论坛</div>
        <p>www.proewildfire.cn</p>
      </div>`;
  }
}
